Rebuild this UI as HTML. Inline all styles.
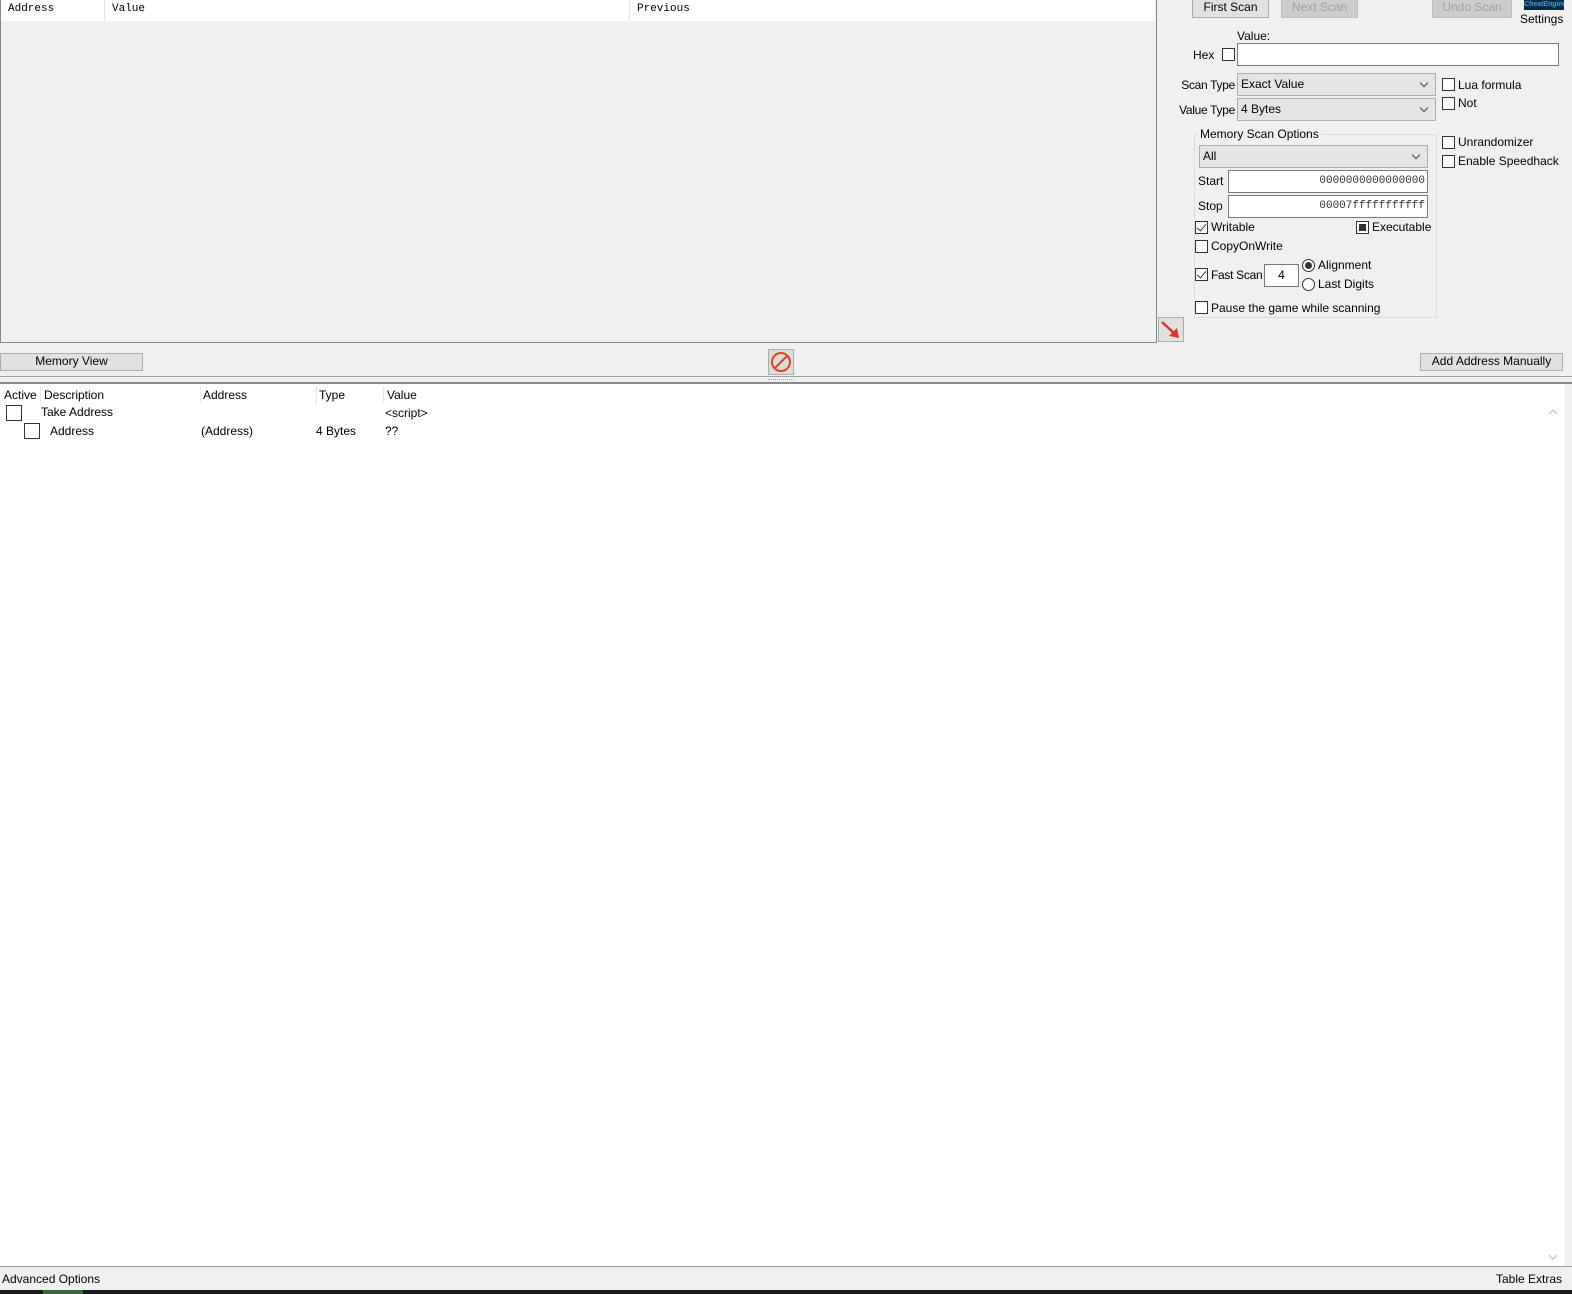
<!DOCTYPE html>
<html><head><meta charset="utf-8"><style>
*{box-sizing:border-box;margin:0;padding:0}
body{width:1572px;height:1294px;background:#f0f0f0;font-family:"Liberation Sans",sans-serif;font-size:12px;color:#000;position:relative;overflow:hidden}
.a{position:absolute;white-space:nowrap}
.r{position:absolute;white-space:nowrap;text-align:right}
.btn{position:absolute;background:#e1e1e1;border:1px solid #adadad;text-align:center;line-height:15px}
.dis{color:#a0a0a0;background:#ccc;border-color:#bfbfbf}
.in{position:absolute;background:#fff;border:1px solid #7a7a7a}
.sel{position:absolute;background:#e5e5e5;border:1px solid #adadad;padding-left:3px;line-height:20px}
.sel:after{content:"";position:absolute;right:8px;top:6px;width:5px;height:5px;border-right:1px solid #444;border-bottom:1px solid #444;transform:rotate(45deg)}
.cb{position:absolute;width:13px;height:13px;border:1px solid #333;background:#fff}
.ck:after{content:"";position:absolute;left:3px;top:0px;width:4px;height:8px;border-right:1.5px solid #333;border-bottom:1.5px solid #333;transform:rotate(40deg)}
.rb{position:absolute;width:13px;height:13px;border:1px solid #333;border-radius:50%;background:#fff}
.mono{font-family:"Liberation Mono",monospace;font-size:11px}
</style></head><body>
<div class="a" style="left:0;top:0;width:1157px;height:343px;border:1px solid #828790;border-top:none;background:#f0f0f0"></div>
<div class="a" style="left:1px;top:0;width:1154px;height:21px;background:#fff"></div>
<div class="a" style="left:104px;top:0;width:1px;height:21px;background:#e5e5e5"></div>
<div class="a" style="left:629px;top:0;width:1px;height:21px;background:#e5e5e5"></div>
<div class="a mono" style="left:8px;top:3px">Address</div>
<div class="a mono" style="left:112px;top:3px">Value</div>
<div class="a mono" style="left:637px;top:3px">Previous</div>

<div class="btn" style="left:1192px;top:-1px;width:77px;height:19px">First Scan</div>
<div class="btn dis" style="left:1281px;top:-1px;width:77px;height:19px">Next Scan</div>
<div class="btn dis" style="left:1432px;top:-1px;width:80px;height:19px">Undo Scan</div>
<div class="a" style="left:1524px;top:0;width:40px;height:10px;background:#0a2a3a;color:#2ad;font-size:7px;font-weight:bold;line-height:10px;font-style:italic;overflow:hidden">CheatEngine</div>
<div class="a" style="left:1520px;top:12px">Settings</div>
<div class="a" style="left:1237px;top:29px">Value:</div>
<div class="a" style="left:1193px;top:48px">Hex</div>
<div class="cb" style="left:1222px;top:48px"></div>
<div class="in" style="left:1237px;top:43px;width:322px;height:23px"></div>
<div class="r" style="right:337px;top:78px;letter-spacing:-0.3px">Scan Type</div>
<div class="sel" style="left:1237px;top:73px;width:199px;height:23px">Exact Value</div>
<div class="r" style="right:337px;top:103px;letter-spacing:-0.3px">Value Type</div>
<div class="sel" style="left:1237px;top:98px;width:199px;height:23px">4 Bytes</div>
<div class="cb" style="left:1442px;top:78px"></div><div class="a" style="left:1458px;top:78px">Lua formula</div>
<div class="cb" style="left:1442px;top:97px"></div><div class="a" style="left:1458px;top:96px">Not</div>
<div class="cb" style="left:1442px;top:136px"></div><div class="a" style="left:1458px;top:135px">Unrandomizer</div>
<div class="cb" style="left:1442px;top:155px"></div><div class="a" style="left:1458px;top:154px">Enable Speedhack</div>

<div class="a" style="left:1194px;top:134px;width:243px;height:184px;border:1px solid #dcdcdc"></div>
<div class="a" style="left:1198px;top:127px;background:#f0f0f0;padding:0 2px">Memory Scan Options</div>
<div class="sel" style="left:1199px;top:145px;width:229px;height:23px">All</div>
<div class="a" style="left:1198px;top:174px">Start</div>
<div class="in mono" style="left:1228px;top:170px;width:200px;height:23px;text-align:right;padding:4px 2px 0 0;color:#333">0000000000000000</div>
<div class="a" style="left:1198px;top:199px">Stop</div>
<div class="in mono" style="left:1228px;top:195px;width:200px;height:23px;text-align:right;padding:4px 2px 0 0;color:#333">00007fffffffffff</div>
<div class="cb ck" style="left:1195px;top:221px"></div><div class="a" style="left:1211px;top:220px">Writable</div>
<div class="cb" style="left:1356px;top:221px"><div style="margin:2px;width:7px;height:7px;background:#333"></div></div><div class="a" style="left:1372px;top:220px">Executable</div>
<div class="cb" style="left:1195px;top:240px"></div><div class="a" style="left:1211px;top:239px">CopyOnWrite</div>
<div class="cb ck" style="left:1195px;top:268px"></div><div class="a" style="left:1211px;top:268px;letter-spacing:-0.3px">Fast Scan</div>
<div class="in" style="left:1264px;top:264px;width:35px;height:23px;text-align:center;line-height:20px">4</div>
<div class="rb" style="left:1302px;top:259px"><div style="margin:2px;width:7px;height:7px;border-radius:50%;background:#333"></div></div><div class="a" style="left:1318px;top:258px">Alignment</div>
<div class="rb" style="left:1302px;top:278px"></div><div class="a" style="left:1318px;top:277px">Last Digits</div>
<div class="cb" style="left:1195px;top:301px"></div><div class="a" style="left:1211px;top:301px">Pause the game while scanning</div>

<div class="a" style="left:1158px;top:317px;width:26px;height:25px;background:#e1e1e1;border:1px solid #adadad">
<svg width="24" height="23"><line x1="3" y1="4" x2="17" y2="17" stroke="#d33" stroke-width="2.5"/><polygon points="20,20 10,18 18,10" fill="#d33"/></svg></div>

<div class="btn" style="left:0;top:353px;width:143px;height:18px">Memory View</div>
<div class="a" style="left:768px;top:349px;width:26px;height:26px;background:#dcdcdc;border:1px solid #adadad">
<svg width="24" height="24"><circle cx="12" cy="12" r="9" fill="none" stroke="#d42" stroke-width="2"/><line x1="6" y1="18" x2="18" y2="6" stroke="#d42" stroke-width="2"/></svg></div>
<div class="btn" style="left:1420px;top:353px;width:143px;height:18px">Add Address Manually</div>
<div class="a" style="left:0;top:376px;width:1572px;height:1px;background:#a0a0a0"></div>
<div class="a" style="left:768px;top:379px;width:26px;border-top:1px dotted #999"></div>
<div class="a" style="left:0;top:382px;width:1572px;height:2px;background:#888"></div>

<div class="a" style="left:0;top:384px;width:1565px;height:882px;background:#fff"></div>
<div class="a" style="left:4px;top:388px">Active</div>
<div class="a" style="left:40px;top:386px;width:1px;height:17px;background:#e5e5e5"></div>
<div class="a" style="left:44px;top:388px">Description</div>
<div class="a" style="left:200px;top:386px;width:1px;height:17px;background:#e5e5e5"></div>
<div class="a" style="left:203px;top:388px">Address</div>
<div class="a" style="left:316px;top:386px;width:1px;height:17px;background:#e5e5e5"></div>
<div class="a" style="left:319px;top:388px">Type</div>
<div class="a" style="left:383px;top:386px;width:1px;height:17px;background:#e5e5e5"></div>
<div class="a" style="left:387px;top:388px">Value</div>
<div class="cb" style="left:6px;top:405px;width:16px;height:16px"></div>
<div class="a" style="left:41px;top:405px">Take Address</div>
<div class="a" style="left:385px;top:406px">&lt;script&gt;</div>
<div class="cb" style="left:24px;top:423px;width:16px;height:16px"></div>
<div class="a" style="left:50px;top:424px">Address</div>
<div class="a" style="left:201px;top:424px">(Address)</div>
<div class="a" style="left:316px;top:424px">4 Bytes</div>
<div class="a" style="left:385px;top:424px">??</div>
<div class="a" style="left:1545px;top:404px;width:17px;height:862px;background:#fff"></div>
<svg class="a" style="left:1547px;top:406px" width="12" height="12"><polyline points="2,8 6,4 10,8" fill="none" stroke="#bbb"/></svg>
<svg class="a" style="left:1547px;top:1251px" width="12" height="12"><polyline points="2,4 6,8 10,4" fill="none" stroke="#bbb"/></svg>

<div class="a" style="left:0;top:1266px;width:1572px;height:1px;background:#999"></div>
<div class="a" style="left:2px;top:1272px">Advanced Options</div>
<div class="r" style="right:10px;top:1272px">Table Extras</div>
<div class="a" style="left:0;top:1290px;width:1572px;height:4px;background:#1c1c1c"></div>
<div class="a" style="left:43px;top:1290px;width:40px;height:4px;background:#3a6a3a"></div>
</body></html>
